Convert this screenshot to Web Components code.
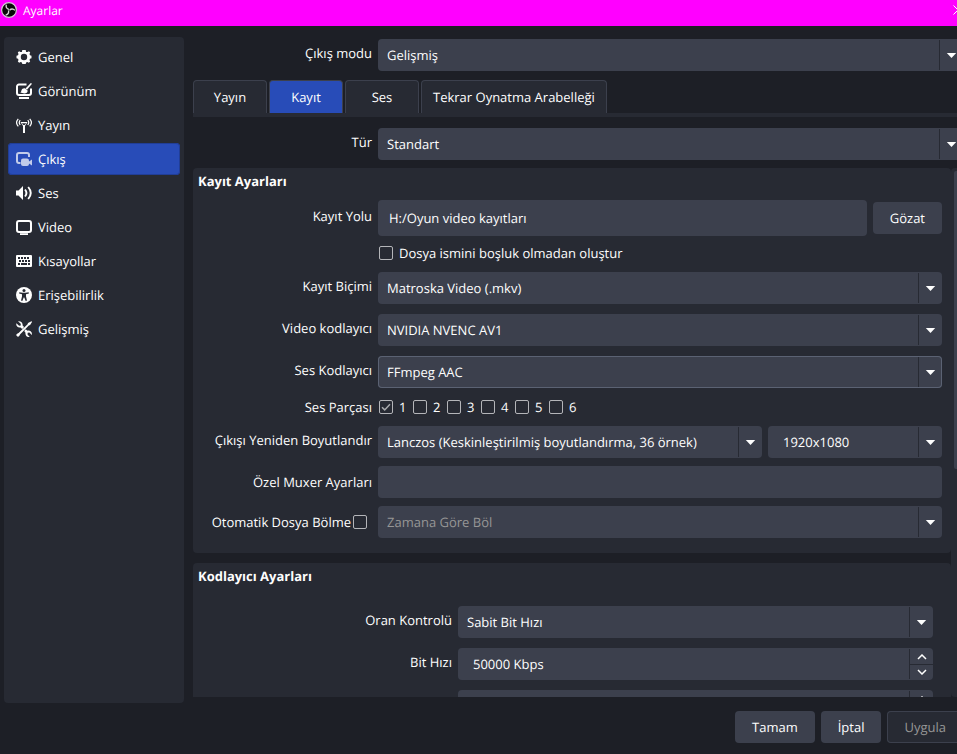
<!DOCTYPE html>
<html lang="tr">
<head>
<meta charset="utf-8">
<title>Ayarlar</title>
<style>
  :root {
    --bg: #1d1f26;
    --panel: #272a33;
    --control: #3c404d;
    --outline: #5b6273;
    --accent: #284cb8;
    --text: #fefefe;
    --muted: #969696;
  }
  html, body { margin: 0; height: 100%; overflow: hidden; background: var(--bg); }
  body { font: 13px/18px "Open Sans", "Noto Sans", sans-serif; color: var(--text); text-rendering: geometricPrecision; }
</style>
</head>
<body>
<settings-window></settings-window>
<script>
const BASE = `
  *, *::before, *::after { box-sizing: border-box; }
  button, input, select { font: inherit; color: inherit; margin: 0; border: 0; outline: 0; text-rendering: inherit; }
`;

const FIELD = `
  :host { display: grid; grid-template-columns: var(--label-width, 179px) minmax(0, 1fr); gap: 6px; }
  .label { display: flex; align-items: center; justify-content: flex-end; padding-bottom: 4px; white-space: nowrap; }
  :host([centered]) .label { padding-bottom: 0; }
  .text { width: 100%; height: 32px; border-radius: 4px; padding: 0 11px; background: var(--control); }
  .combo { display: grid; grid-template-columns: minmax(0, 1fr) 24px; height: 32px; border-radius: 4px; background: var(--control); }
  .combo select { appearance: none; grid-area: 1 / 1 / 2 / 3; width: 100%; height: 32px; padding: 0 33px 0 9px; background: none; border-radius: 4px; }
  .combo select:disabled { color: var(--muted); opacity: 1; }
  .combo.wide select { padding-left: 15px; }
  .combo svg { grid-area: 1 / 2; width: 24px; height: 30px; align-self: center; border-left: 1px solid var(--panel); pointer-events: none; }
  :host([active]) .combo { box-shadow: inset 0 0 0 1px var(--outline); }
`;

const CHECK = `
  .check { appearance: none; flex: none; width: 14px; height: 14px; border: 1px solid #b4b5b9; border-radius: 2px; background: none; }
  .tick { display: grid; }
  .tick > * { grid-area: 1 / 1; }
  .tick svg { width: 14px; height: 14px; pointer-events: none; }
`;

const ARROW = `<svg viewBox="0 0 23 30" aria-hidden="true"><path d="M6.800 13h9.400l-4.700 5z" fill="#fefefe"/></svg>`;

const ICONS = {
  gear: `<path fill-rule="evenodd" d="M6.300 1h3.400l.4 1.900 1.500.1 1.300-.7 1.300 1.300-.7 1.500.5 1.200 1.500.4v2.600l-1.500.5-.5 1.200.7 1.400-1.400 1.400-1.400-.7-1.300.5L9.700 15H6.300l-.4-1.400-1.300-.5-1.400.7-1.400-1.400.7-1.400-.5-1.200-1.500-.5V6.700L2 6.300l.5-1.200-.7-1.500 1.300-1.300 1.300.7 1.500-.1zM8 4.800a3.200 3.200 0 1 0 0 6.400 3.200 3.200 0 0 0 0-6.400z"/>`,
  look: `<path d="M10.500 1.500H3A2 2 0 0 0 1 3.500V10a2 2 0 0 0 2 2h10a2 2 0 0 0 2-2V5.500" fill="none" stroke="#fefefe" stroke-width="2"/><path d="M3 14h10v2H3z"/><path d="M14.800 0L16 .8 11 6.800 9.500 5.600z"/><path d="M9.200 5.400l2.400 2c.2 2.300-1.600 3.100-3.300 3-1.600 0-2.800-.3-4-.8 1-.5.9-1.300 1.200-2.300.5-1.500 1.900-2.300 3.700-1.900z"/>`,
  stream: `<path d="M4.500 5h7L9 9v7H7V9z"/><path d="M5.800 6.200h4.400L8.700 8H7.300z" fill="#272a33"/><g fill="none" stroke="#fefefe" stroke-width="1.200"><path d="M2.300 1.800C.2 4 .2 7 2.300 9.400M13.700 1.800c2.100 2.200 2.100 5.200 0 7.600M4.200 3.200c-1.200 1.500-1.200 3.300 0 4.800M11.800 3.200c1.200 1.500 1.200 3.300 0 4.800"/></g>`,
  output: `<g opacity=".72"><path d="M4.500 12H3a2 2 0 0 1-2-2V4a2 2 0 0 1 2-2h8a2 2 0 0 1 2 2v2" fill="none" stroke="#fefefe" stroke-width="2"/><rect x="5" y="7.500" width="8" height="7.500" rx="2"/><path d="M13 10.500l3-2v6l-3-2z"/></g>`,
  audio: `<path d="M0 5.500h2.500L7 1v14l-4.500-4.500H0z"/><g fill="none" stroke="#fefefe" stroke-width="1.900"><path d="M9 4.500c1.900 2.300 1.900 4.700 0 7M12.200 2c3.400 4 3.400 8 0 12"/></g>`,
  video: `<rect x="1" y="2" width="14" height="11" rx="2" fill="none" stroke="#fefefe" stroke-width="2"/><path d="M4 14.200h8V16H4z"/>`,
  keys: `<path fill-rule="evenodd" d="M1 2h14a1 1 0 0 1 1 1v10a1 1 0 0 1-1 1H1a1 1 0 0 1-1-1V3a1 1 0 0 1 1-1zM2 4v2h2V4zm3 0v2h2V4zm3 0v2h2V4zm3 0v2h2V4zM3 7v2h2V7zm3 0v2h2V7zm3 0v2h2V7zm3 0v2h2V7zM2 10v2h2v-2zm3 0v2h6v-2zm7 0v2h2v-2z"/>`,
  access: `<circle cx="8" cy="8" r="8"/><g fill="#272a33"><circle cx="8" cy="3.500" r="1.500"/><path d="M3.300 5.200l3.200.5h3l3.200-.5.2 1.200-2.900.8v2.300l1 4-1.300.4L8.300 10.500h-.6l-1.400 3.400-1.300-.4 1-4V7.200l-2.900-.8z"/></g>`,
  tools: `<path d="M15.500.3l.6.6-2 3.200-1.300.3-8.800 9-.4 1.100L2 16 0 14l1.500-1.600 1.100-.4 9-8.800.4-1.300z"/><path d="M2 .3l2.700 2.500.1 1.700-1.700.2L.4 2.200C-.3 4.700 1.500 7 4.500 6.500l1.700 1.500 1.900-1.900L6.600 4.600C7.100 2 4.600-.4 2 .3z"/><path d="M9.700 8.300l-1.500 1.800 1.300 1.600c-.5 2.700 1.800 4.900 4.300 4.200l-2.300-2.400.2-1.700 1.700-.2 2.400 2.300c.7-2.800-1.500-4.700-4.300-4.200z"/>`
};

class Base extends HTMLElement {
  connectedCallback() {
    if (this.shadowRoot) return;
    const t = document.createElement("template");
    t.innerHTML = `<style>${BASE}${this.css()}</style>${this.html()}`;
    this.attachShadow({ mode: "open" }).append(t.content.cloneNode(true));
  }
  attr(name) { return this.getAttribute(name) || ""; }
}

customElements.define("title-bar", class extends Base {
  css() { return `
    :host { display: flex; align-items: flex-start; gap: 6px; height: 26px; padding: 2px 0 0 1px; background: #ff00ff; font-size: 12px; }
    .logo { width: 16px; height: 16px; flex: none; }
    h1 { margin: 0; font: inherit; flex: 1; }
    button { display: flex; background: none; padding: 3px 0 0; width: 10px; height: 16px; }`; }
  html() { return `
    <svg class="logo" viewBox="0 0 16 16" aria-hidden="true">
      <circle cx="8" cy="8" r="7.400" fill="#090909" stroke="#d5c6d5" stroke-width="1.200"/>
      <g fill="none" stroke="#d8d8d8" stroke-width="1.300">
        <path d="M5.300 2.600C4.800 5 5.800 6.800 8 7.400"/>
        <path d="M5.300 2.600C4.800 5 5.800 6.800 8 7.400" transform="rotate(120 8 8)"/>
        <path d="M5.300 2.600C4.800 5 5.800 6.800 8 7.400" transform="rotate(240 8 8)"/>
      </g>
    </svg>
    <h1><slot></slot></h1>
    <button aria-label="Kapat"><svg width="10" height="10" viewBox="0 0 10 10"><path d="M.5.500l9 9M9.500.500l-9 9" stroke="#fff"/></svg></button>`; }
});

customElements.define("nav-item", class extends Base {
  css() { return `
    :host { display: block; }
    button { display: flex; align-items: center; gap: 6px; width: 100%; height: 32px; padding: 0 8px; background: none; border-radius: 4px; text-align: left; }
    :host([selected]) button { background: var(--accent); box-shadow: inset 0 0 0 1px #213e97; }
    svg { width: 16px; height: 16px; flex: none; }`; }
  html() { return `<button><svg viewBox="0 0 16 16" fill="#fefefe" aria-hidden="true">${ICONS[this.attr("icon")]}</svg><span><slot></slot></span></button>`; }
});

customElements.define("side-nav", class extends Base {
  css() { return `
    :host { display: block; flex: none; width: 180px; background: var(--panel); border-radius: 4px; padding: 4px; }
    nav { display: flex; flex-direction: column; gap: 2px; }`; }
  html() { return `<nav><slot></slot></nav>`; }
});

customElements.define("tab-item", class extends Base {
  css() { return `
    :host { display: block; }
    button { height: 33px; min-width: 74px; padding: 0 11px; background: var(--panel); border: 1px solid var(--control); border-bottom: 0; border-radius: 4px 4px 0 0; white-space: nowrap; }
    :host([selected]) button { background: var(--accent); }`; }
  html() { return `<button><slot></slot></button>`; }
});

customElements.define("tab-strip", class extends Base {
  css() { return `:host { display: flex; gap: 2px; border-bottom: 4px solid var(--panel); }`; }
  html() { return `<slot></slot>`; }
});

customElements.define("push-button", class extends Base {
  css() { return `
    :host { display: block; flex: none; }
    button { height: 32px; padding: 0 17px; border-radius: 4px; background: var(--control); white-space: nowrap; }
    button:disabled { background: var(--panel); color: var(--muted); box-shadow: inset 0 0 0 1px var(--control); }`; }
  html() { return `<button ${this.hasAttribute("disabled") ? "disabled" : ""}><slot></slot></button>`; }
});

customElements.define("combo-field", class extends Base {
  css() { return FIELD; }
  html() { return `
    <label class="label" for="c">${this.attr("label")}</label>
    <div class="combo"><select id="c"><option>${this.attr("value")}</option></select>${ARROW}</div>`; }
});

customElements.define("text-field", class extends Base {
  css() { return FIELD; }
  html() { return `
    <label class="label" for="c">${this.attr("label")}</label>
    <input class="text" id="c" value="${this.attr("value")}">`; }
});

customElements.define("path-field", class extends Base {
  css() { return FIELD + `
    .pair { display: flex; align-items: center; gap: 6px; }
    .text { flex: 1; min-width: 0; height: 36px; }`; }
  html() { return `
    <label class="label" for="c">${this.attr("label")}</label>
    <div class="pair"><input class="text" id="c" value="${this.attr("value")}"><push-button><slot></slot></push-button></div>`; }
});

customElements.define("check-field", class extends Base {
  css() { return FIELD + CHECK + `
    .line { grid-column: 2; display: flex; align-items: center; gap: 6px; height: 16px; padding: 0 0 2px 1px; }`; }
  html() { return `<label class="line"><input class="check" type="checkbox"><span><slot></slot></span></label>`; }
});

customElements.define("track-field", class extends Base {
  css() { return FIELD + CHECK + `
    .label { padding: 0; }
    .tracks { display: flex; gap: 6px; height: 18px; padding-left: 1px; }
    .tracks label { display: flex; align-items: center; gap: 6px; }
    .tracks span { width: 8px; }`; }
  html() { return `
    <span class="label" id="l">${this.attr("label")}</span>
    <div class="tracks" role="group" aria-labelledby="l">${[1, 2, 3, 4, 5, 6].map(n => n === 1
      ? `<label><div class="tick"><input class="check" type="checkbox" checked><svg viewBox="0 0 14 14"><path d="M3 7.200l2.700 2.700L11 4.300" fill="none" stroke="#a9aaad" stroke-width="1.500"/></svg></div><span>1</span></label>`
      : `<label><input class="check" type="checkbox"><span>${n}</span></label>`).join("")}</div>`; }
});

customElements.define("rescale-field", class extends Base {
  css() { return FIELD + `
    .pair { display: grid; grid-template-columns: minmax(0, 1fr) 174px; gap: 6px; }`; }
  html() { return `
    <label class="label" for="c">${this.attr("label")}</label>
    <div class="pair">
      <div class="combo"><select id="c"><option>${this.attr("filter")}</option></select>${ARROW}</div>
      <div class="combo wide"><select aria-label="Çözünürlük"><option>${this.attr("size")}</option></select>${ARROW}</div>
    </div>`; }
});

customElements.define("split-field", class extends Base {
  css() { return FIELD + CHECK + `
    .label { padding: 0 5px 0 0; gap: 2px; }`; }
  html() { return `
    <label class="label">${this.attr("label")}<input class="check" type="checkbox"></label>
    <div class="combo"><select disabled aria-label="${this.attr("label")}"><option>${this.attr("value")}</option></select>${ARROW}</div>`; }
});

customElements.define("spin-field", class extends Base {
  css() { return FIELD + `
    .spin { display: grid; grid-template-columns: minmax(0, 1fr) 24px; height: 32px; border-radius: 4px; background: var(--control); }
    .spin input { padding: 0 15px; background: none; min-width: 0; }
    .steps { display: grid; grid-template-rows: 15px 15px; margin: 1px 0; border-left: 1px solid var(--panel); }
    .steps button { display: grid; place-items: center; padding: 0; background: none; }
    .steps button + button { border-top: 1px solid var(--panel); }`; }
  html() { return `
    <label class="label" for="c">${this.attr("label")}</label>
    <div class="spin"><input id="c" value="${this.attr("value")}">
      <div class="steps">
        <button aria-label="Artır"><svg width="10" height="6" viewBox="0 0 10 6"><path d="M1 5l4-4 4 4" fill="none" stroke="#fefefe" stroke-width="1.500"/></svg></button>
        <button aria-label="Azalt"><svg width="10" height="6" viewBox="0 0 10 6"><path d="M1 1l4 4 4-4" fill="none" stroke="#fefefe" stroke-width="1.500"/></svg></button>
      </div>
    </div>`; }
});

customElements.define("settings-group", class extends Base {
  css() { return `
    :host { display: block; background: var(--panel); border-radius: 4px; padding: 4px 9px 15px 0; --label-width: 179px; }
    :host([nested]) { padding-right: 18px; --label-width: 259px; }
    h2 { margin: 0 0 10px 5px; font-size: 13px; line-height: 18px; font-weight: 700; }
    :host([nested]) h2 { margin-bottom: 21px; }
    .rows { display: flex; flex-direction: column; gap: 10px; }`; }
  html() { return `<h2>${this.attr("heading")}</h2><div class="rows"><slot></slot></div>`; }
});

customElements.define("scroll-pane", class extends Base {
  css() { return `
    :host { display: grid; grid-template-columns: minmax(0, 1fr) 12px; flex: 1; min-height: 0; overflow: hidden; }
    .content { display: flex; flex-direction: column; gap: 10px; min-height: 0; overflow: hidden; }
    ::slotted(*) { flex: none; }
    .track { background: var(--panel); border-radius: 4px; padding: 3px; }
    .thumb { height: 57%; border-radius: 2px; background: var(--control); }`; }
  html() { return `<div class="content"><slot></slot></div><div class="track"><div class="thumb"></div></div>`; }
});

customElements.define("settings-window", class extends Base {
  css() { return `
    :host { display: flex; flex-direction: column; height: 100vh; margin-right: -6px; }
    .body { display: flex; gap: 9px; flex: 1; min-height: 0; padding: 11px 0 0 4px; }
    main { display: flex; flex-direction: column; flex: 1; min-width: 0; padding: 2px 0 6px; }
    tab-strip { margin: 9px 0 11px; }
    scroll-pane { margin-top: 8px; }
    .tight { display: flex; flex-direction: column; gap: 8px; }
    footer { display: flex; justify-content: flex-end; gap: 6px; padding: 8px 0 11px; }`; }
  html() { return `
    <title-bar>Ayarlar</title-bar>
    <div class="body">
      <side-nav>
        <nav-item icon="gear">Genel</nav-item>
        <nav-item icon="look">Görünüm</nav-item>
        <nav-item icon="stream">Yayın</nav-item>
        <nav-item icon="output" selected>Çıkış</nav-item>
        <nav-item icon="audio">Ses</nav-item>
        <nav-item icon="video">Video</nav-item>
        <nav-item icon="keys">Kısayollar</nav-item>
        <nav-item icon="access">Erişebilirlik</nav-item>
        <nav-item icon="tools">Gelişmiş</nav-item>
      </side-nav>
      <main>
        <combo-field label="Çıkış modu" value="Gelişmiş"></combo-field>
        <tab-strip>
          <tab-item>Yayın</tab-item>
          <tab-item selected>Kayıt</tab-item>
          <tab-item>Ses</tab-item>
          <tab-item>Tekrar Oynatma Arabelleği</tab-item>
        </tab-strip>
        <combo-field label="Tür" value="Standart"></combo-field>
        <scroll-pane>
          <settings-group heading="Kayıt Ayarları">
            <path-field label="Kayıt Yolu" value="H:/Oyun video kayıtları">Gözat</path-field>
            <check-field>Dosya ismini boşluk olmadan oluştur</check-field>
            <combo-field label="Kayıt Biçimi" value="Matroska Video (.mkv)"></combo-field>
            <combo-field label="Video kodlayıcı" value="NVIDIA NVENC AV1"></combo-field>
            <combo-field label="Ses Kodlayıcı" value="FFmpeg AAC" active></combo-field>
            <track-field label="Ses Parçası"></track-field>
            <div class="tight">
              <rescale-field label="Çıkışı Yeniden Boyutlandır" filter="Lanczos (Keskinleştirilmiş boyutlandırma, 36 örnek)" size="1920x1080"></rescale-field>
              <text-field label="Özel Muxer Ayarları" centered></text-field>
              <split-field label="Otomatik Dosya Bölme" value="Zamana Göre Böl"></split-field>
            </div>
          </settings-group>
          <settings-group heading="Kodlayıcı Ayarları" nested>
            <combo-field label="Oran Kontrolü" value="Sabit Bit Hızı"></combo-field>
            <spin-field label="Bit Hızı" value="50000 Kbps"></spin-field>
            <spin-field></spin-field>
          </settings-group>
        </scroll-pane>
      </main>
    </div>
    <footer>
      <push-button>Tamam</push-button>
      <push-button>İptal</push-button>
      <push-button disabled>Uygula</push-button>
    </footer>`; }
});
</script>
</body>
</html>
